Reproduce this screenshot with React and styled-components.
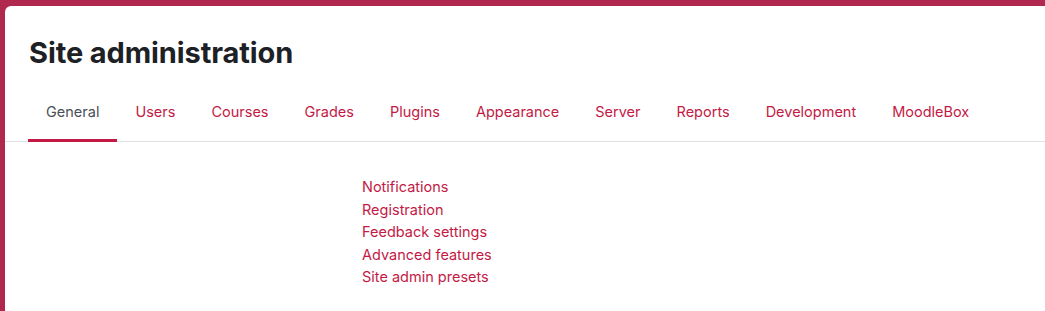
import React from 'react';
import styled, { createGlobalStyle } from 'styled-components';

const GlobalStyle = createGlobalStyle`
  html, body {
    margin: 0;
    padding: 0;
    background: #b0284e;
    font-family: Inter, "Noto Sans", "Liberation Sans", sans-serif;
  }
`;

const Frame = styled.div`
  min-height: 311px;
  padding: 6px 0 0 5px;
  box-sizing: border-box;
  display: flex;
  flex-direction: column;
`;

const Card = styled.div`
  flex: 1;
  background: #ffffff;
  border-top-left-radius: 6px;
  padding: 30px 0 0 0;
`;

const Title = styled.h1`
  margin: 0 0 23px 24px;
  font-size: 29px;
  line-height: 34px;
  font-weight: 700;
  color: #1d2125;
  letter-spacing: -0.1px;
`;

const TabBar = styled.nav`
  display: flex;
  border-bottom: 1px solid #dee2e6;
  padding-left: 23px;
`;

const Tab = styled.a`
  display: block;
  padding: 8px 18px 16px;
  margin-bottom: -1px;
  font-size: 14.5px;
  line-height: 22px;
  text-decoration: none;
  color: ${({ active }) => (active ? '#495057' : '#c31a45')};
  border-bottom: 3px solid ${({ active }) => (active ? '#c31a45' : 'transparent')};
  cursor: pointer;
`;

const Section = styled.div`
  display: grid;
  grid-template-columns: 334px 1fr;
  padding: 34px 0 0 23px;
`;

const LinkList = styled.ul`
  list-style: none;
  margin: 0;
  padding: 0;
`;

const LinkItem = styled.li`
  font-size: 14.5px;
  line-height: 22.5px;

  a {
    color: #c31a45;
    text-decoration: none;
  }
`;

const tabs = [
  'General',
  'Users',
  'Courses',
  'Grades',
  'Plugins',
  'Appearance',
  'Server',
  'Reports',
  'Development',
  'MoodleBox',
];

const links = [
  'Notifications',
  'Registration',
  'Feedback settings',
  'Advanced features',
  'Site admin presets',
];

const App = () => (
  <>
    <GlobalStyle />
    <Frame>
      <Card>
        <Title>Site administration</Title>
        <TabBar>
          {tabs.map((t, i) => (
            <Tab key={t} active={i === 0}>{t}</Tab>
          ))}
        </TabBar>
        <Section>
          <div />
          <LinkList>
            {links.map((l) => (
              <LinkItem key={l}><a href="#">{l}</a></LinkItem>
            ))}
          </LinkList>
        </Section>
      </Card>
    </Frame>
  </>
);

export default App;
